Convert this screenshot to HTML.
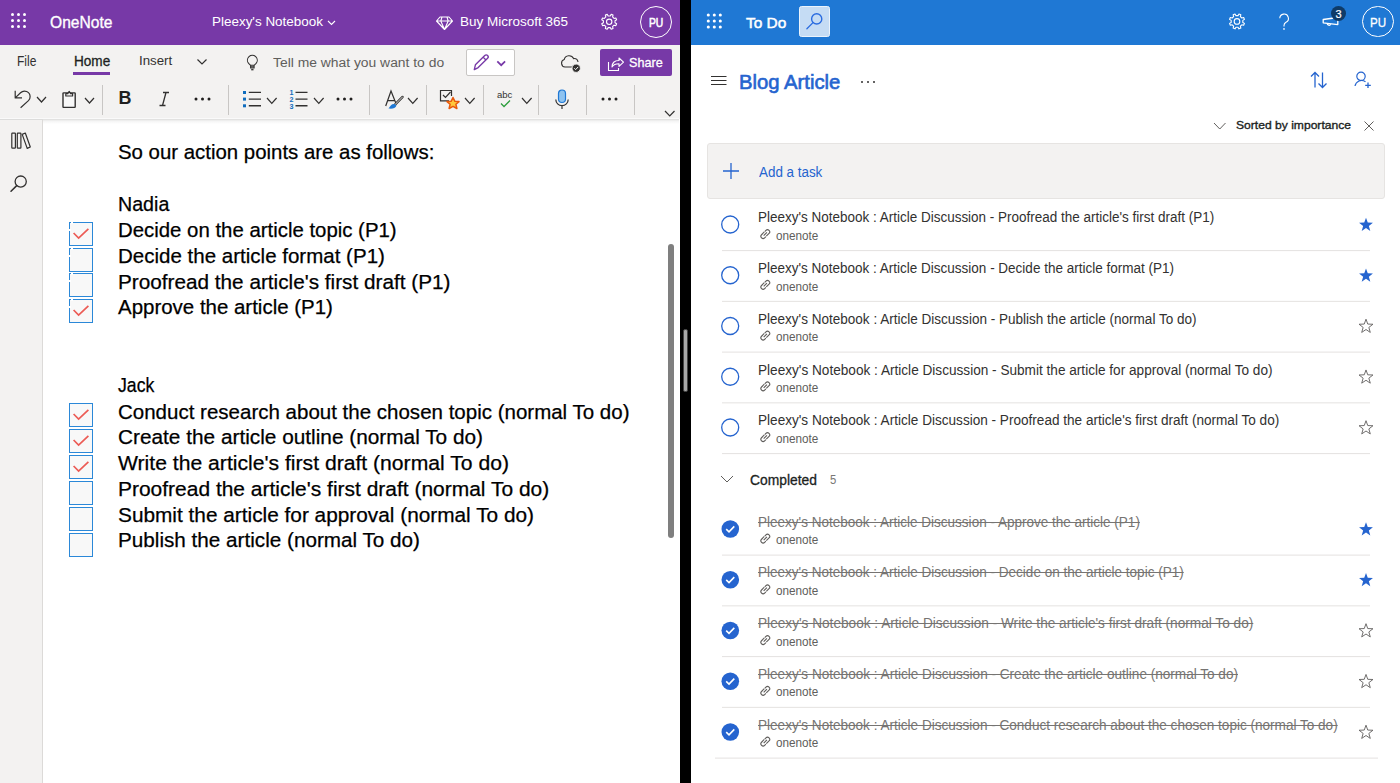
<!DOCTYPE html>
<html><head><meta charset="utf-8"><style>
html,body{margin:0;padding:0;}
body{width:1400px;height:783px;position:relative;overflow:hidden;background:#fff;font-family:"Liberation Sans",sans-serif;}
.a{position:absolute;box-sizing:border-box;}
.t{position:absolute;white-space:nowrap;line-height:1;transform-origin:0 0;font-family:"Liberation Sans",sans-serif;}
svg{position:absolute;overflow:visible;}
</style></head><body>
<div class="a" style="left:0;top:0;width:680px;height:45px;background:#7739a7"></div>
<div class="a" style="left:0;top:45px;width:680px;height:74px;background:#f3f2f1"></div>
<div class="a" style="left:0;top:118px;width:679px;height:1px;background:#fafafa"></div>
<div class="a" style="left:0;top:119px;width:679px;height:5px;background:linear-gradient(#dcdcdb,#f4f4f4 40%,#fff)"></div>
<div class="a" style="left:0;top:120px;width:43px;height:663px;background:#f3f2f1;border-right:1px solid #dcdad8"></div>
<div class="a" style="left:0;top:119px;width:43px;height:1px;background:#dcdcdb"></div>
<svg style="left:0;top:0" width="40" height="40"><circle cx="12.5" cy="14.5" r="1.5" fill="#fff"/><circle cx="12.5" cy="20.5" r="1.5" fill="#fff"/><circle cx="12.5" cy="26.5" r="1.5" fill="#fff"/><circle cx="18.5" cy="14.5" r="1.5" fill="#fff"/><circle cx="18.5" cy="20.5" r="1.5" fill="#fff"/><circle cx="18.5" cy="26.5" r="1.5" fill="#fff"/><circle cx="24.5" cy="14.5" r="1.5" fill="#fff"/><circle cx="24.5" cy="20.5" r="1.5" fill="#fff"/><circle cx="24.5" cy="26.5" r="1.5" fill="#fff"/></svg>
<svg style="left:326px;top:18px" width="12" height="10"><path d="M2 3 L5.5 6.5 L9 3" stroke="#fff" stroke-width="1.1" fill="none"/></svg>
<svg style="left:436px;top:16px" width="18" height="15"><path d="M4 1 H13 L16.5 5 L8.5 13.5 L0.5 5 Z M0.5 5 H16.5 M6 1 L4.8 5 L8.5 13.5 L12.2 5 L11 1" stroke="#fff" stroke-width="1.1" fill="none" stroke-linejoin="round"/></svg>
<svg style="left:0;top:0" width="700" height="45"><path d="M615.01 22.81 L616.64 23.80 L615.87 25.64 L614.03 25.19 L612.59 26.63 L613.04 28.47 L611.20 29.24 L610.21 27.61 L608.19 27.61 L607.20 29.24 L605.36 28.47 L605.81 26.63 L604.37 25.19 L602.53 25.64 L601.76 23.80 L603.39 22.81 L603.39 20.79 L601.76 19.80 L602.53 17.96 L604.37 18.41 L605.81 16.97 L605.36 15.13 L607.20 14.36 L608.19 15.99 L610.21 15.99 L611.20 14.36 L613.04 15.13 L612.59 16.97 L614.03 18.41 L615.87 17.96 L616.64 19.80 L615.01 20.79 Z" stroke="#fff" stroke-width="1.1" fill="none" stroke-linejoin="round"/><circle cx="609.2" cy="21.8" r="2.7" stroke="#fff" stroke-width="1.1" fill="none"/></svg>
<div class="a" style="left:640px;top:5.5px;width:32px;height:32px;border:1.2px solid #fff;border-radius:50%"></div>
<div class="a" style="left:73px;top:72px;width:37px;height:3px;background:#7739a7"></div>
<svg style="left:195px;top:56px" width="14" height="12"><path d="M2.5 3.5 L7 8 L11.5 3.5" stroke="#323130" stroke-width="1.2" fill="none"/></svg>
<svg style="left:244px;top:53px" width="18" height="20"><path d="M6.6 12.3 L4.6 10.4 A4.9 4.9 0 1 1 12.1 10.4 L10.1 12.3 Z M6.6 12.3 V15 H10.1 V12.3 M6.6 13.7 H10.1" stroke="#323130" stroke-width="1.1" fill="none" stroke-linejoin="round"/><path d="M7.2 16.7 H9.5" stroke="#323130" stroke-width="1.3"/></svg>
<div class="a" style="left:466px;top:49px;width:49px;height:27px;background:#fff;border:1px solid #c8c6c4;border-radius:2px"></div>
<svg style="left:470px;top:52px" width="40" height="22"><path d="M4.3 17.6 L5.4 12.8 L14.8 3.4 A1.75 1.75 0 0 1 17.6 6.2 L8.2 15.6 Z M13.1 5.1 L15.9 7.9" stroke="#7739a7" stroke-width="1.35" fill="none" stroke-linejoin="round"/><path d="M27.3 9.3 L31.2 13.2 L35.1 9.3" stroke="#7739a7" stroke-width="1.7" fill="none"/></svg>
<svg style="left:559px;top:54px" width="24" height="20"><path d="M14 13 H6 A3.8 3.8 0 0 1 5.2 5.6 A5 5 0 0 1 14.6 4.6 A4 4 0 0 1 19 8" stroke="#323130" stroke-width="1.1" fill="none"/><circle cx="17.2" cy="14.2" r="4.2" fill="#323130" stroke="#f3f2f1" stroke-width="1"/><path d="M15.3 14.3 L16.7 15.6 L19.2 12.9" stroke="#fff" stroke-width="1" fill="none"/></svg>
<div class="a" style="left:600px;top:49px;width:72px;height:27px;background:#7739a7;border-radius:2px"></div>
<svg style="left:606px;top:54px" width="20" height="18"><path d="M2.5 8 V16.5 H12.5 V14 M6 13 C6 8.5 9 6.5 13 6.5 V4 L17.5 8.2 L13 12.4 V9.8 C10 9.8 7.5 10.5 6 13 Z" stroke="#fff" stroke-width="1.1" fill="none" stroke-linejoin="round"/></svg>
<div class="a" style="left:101.5px;top:84.5px;width:1px;height:30px;background:#c8c6c4"></div>
<div class="a" style="left:227.5px;top:84.5px;width:1px;height:30px;background:#c8c6c4"></div>
<div class="a" style="left:369.0px;top:84.5px;width:1px;height:30px;background:#c8c6c4"></div>
<div class="a" style="left:426.0px;top:84.5px;width:1px;height:30px;background:#c8c6c4"></div>
<div class="a" style="left:482.5px;top:84.5px;width:1px;height:30px;background:#c8c6c4"></div>
<div class="a" style="left:538.0px;top:84.5px;width:1px;height:30px;background:#c8c6c4"></div>
<div class="a" style="left:586.0px;top:84.5px;width:1px;height:30px;background:#c8c6c4"></div>
<div class="a" style="left:633.8px;top:84.5px;width:1px;height:30px;background:#c8c6c4"></div>
<svg style="left:12px;top:88px" width="24" height="24"><path d="M3.2 2.8 V9.9 H10 M3.2 9.9 L8.54 4.74 A5.6 5.6 0 0 1 18.1 8.7 A5.6 5.6 0 0 1 16.46 12.66 L8.6 19.8" stroke="#323130" stroke-width="1.2" fill="none" stroke-linejoin="round"/></svg>
<svg style="left:35.9px;top:96.3px" width="11" height="7"><path d="M1 1 L5.5 6 L10 1" stroke="#323130" stroke-width="1.2" fill="none"/></svg>
<svg style="left:60px;top:90px" width="18" height="20"><rect x="3" y="2.9" width="12.2" height="14.5" rx="0.6" stroke="#323130" stroke-width="1.4" fill="#f8f8f8"/><path d="M5.8 6 H12.6 V3.6 H10.6 L9.2 1.4 L7.8 3.6 H5.8 Z" stroke="#323130" stroke-width="1.2" fill="#f3f2f1" stroke-linejoin="round"/></svg>
<svg style="left:83.7px;top:97.3px" width="11" height="7"><path d="M1 1 L5.5 6 L10 1" stroke="#323130" stroke-width="1.2" fill="none"/></svg>
<div class="t" style="left:118.5px;top:89px;font-size:18px;font-weight:700;color:#201f1e">B</div>
<svg style="left:157px;top:90px" width="16" height="18"><path d="M9 2.5 L5.5 15.5 M6 2.5 H12 M2.5 15.5 H8.5" stroke="#323130" stroke-width="1.3" fill="none"/></svg>
<svg style="left:194px;top:96px" width="24" height="6"><circle cx="2.0" cy="3" r="1.5" fill="#201f1e"/><circle cx="8.5" cy="3" r="1.5" fill="#201f1e"/><circle cx="15.0" cy="3" r="1.5" fill="#201f1e"/></svg>
<svg style="left:242px;top:89px" width="22" height="20"><rect x="1" y="2" width="3" height="3" fill="#0f6cbd"/><rect x="1" y="8.6" width="3" height="3" fill="#0f6cbd"/><rect x="1" y="15.3" width="3" height="3" fill="#0f6cbd"/><path d="M6.8 3.4 H19 M6.8 10.1 H19 M6.8 16.8 H19" stroke="#323130" stroke-width="1.4"/></svg>
<svg style="left:265.9px;top:96.8px" width="11.6" height="7.3"><path d="M1 1 L5.8 6.3 L10.6 1" stroke="#323130" stroke-width="1.2" fill="none"/></svg>
<svg style="left:288px;top:89px" width="22" height="20"><text x="1.6" y="6.2" font-size="7.2" font-weight="700" font-family="Liberation Sans" fill="#0f6cbd">1</text><text x="1.6" y="12.9" font-size="7.2" font-weight="700" font-family="Liberation Sans" fill="#0f6cbd">2</text><text x="1.6" y="19.6" font-size="7.2" font-weight="700" font-family="Liberation Sans" fill="#0f6cbd">3</text><path d="M7.5 3.4 H19.5 M7.5 10.1 H19.5 M7.5 16.8 H19.5" stroke="#323130" stroke-width="1.4"/></svg>
<svg style="left:312.8px;top:96.8px" width="11.6" height="7.3"><path d="M1 1 L5.8 6.3 L10.6 1" stroke="#323130" stroke-width="1.2" fill="none"/></svg>
<svg style="left:336px;top:96px" width="24" height="6"><circle cx="2.0" cy="3" r="1.5" fill="#201f1e"/><circle cx="8.5" cy="3" r="1.5" fill="#201f1e"/><circle cx="15.0" cy="3" r="1.5" fill="#201f1e"/></svg>
<svg style="left:384px;top:89px" width="22" height="22"><path d="M1.7 17 L7 2 L12 14.5 M3.6 11.6 H10.6" stroke="#323130" stroke-width="1.2" fill="none"/><path d="M18.6 7.9 L11 15.6" stroke="#323130" stroke-width="2.4" stroke-linecap="round"/><path d="M18.6 7.9 L11 15.6" stroke="#f3f2f1" stroke-width="0.9" stroke-linecap="round"/><path d="M10.5 15 C8 14.5 6.5 16.5 4.5 19.5 C8 20 11.5 19.5 12.5 16.5 Z" fill="#1f78d4"/></svg>
<svg style="left:407.1px;top:96.8px" width="11.6" height="7.3"><path d="M1 1 L5.8 6.3 L10.6 1" stroke="#323130" stroke-width="1.2" fill="none"/></svg>
<svg style="left:438px;top:88px" width="24" height="24"><path d="M11 12.8 H2.5 V2.5 H13.5 V8" stroke="#323130" stroke-width="1.2" fill="none"/><path d="M5 7 L7.5 9.5 L12.5 4" stroke="#323130" stroke-width="1.2" fill="none"/><path d="M15 9.5 L16.9 13.3 L21 13.6 L17.9 16.3 L18.9 20.5 L15 18.3 L11.1 20.5 L12.1 16.3 L9 13.6 L13.1 13.3 Z" fill="#ffc83d" stroke="#e8590c" stroke-width="1.5" stroke-linejoin="round"/></svg>
<svg style="left:464.4px;top:96.8px" width="11.6" height="7.3"><path d="M1 1 L5.8 6.3 L10.6 1" stroke="#323130" stroke-width="1.2" fill="none"/></svg>
<svg style="left:496px;top:89px" width="20" height="20"><text x="1" y="9" font-size="9.5" font-family="Liberation Sans" fill="#323130">abc</text><path d="M5 14.5 L8 17.5 L14 11.5" stroke="#2e9e3e" stroke-width="1.3" fill="none"/></svg>
<svg style="left:521px;top:96.8px" width="11.6" height="7.3"><path d="M1 1 L5.8 6.3 L10.6 1" stroke="#323130" stroke-width="1.2" fill="none"/></svg>
<svg style="left:554px;top:89px" width="16" height="22"><rect x="4.5" y="1" width="7" height="12.5" rx="3.5" fill="#8ec3f0" stroke="#1f78d4" stroke-width="1.2"/><path d="M1.8 10.5 A6.2 6.2 0 0 0 14.2 10.5 M8 16.8 V20" stroke="#323130" stroke-width="1.2" fill="none"/></svg>
<svg style="left:600.5px;top:96px" width="24" height="6"><circle cx="2.0" cy="3" r="1.5" fill="#201f1e"/><circle cx="8.5" cy="3" r="1.5" fill="#201f1e"/><circle cx="15.0" cy="3" r="1.5" fill="#201f1e"/></svg>
<svg style="left:664px;top:109.5px" width="11.5" height="7"><path d="M1 1 L5.75 6 L10.5 1" stroke="#323130" stroke-width="1.2" fill="none"/></svg>
<svg style="left:9px;top:130px" width="24" height="22"><rect x="2.8" y="3.2" width="3.6" height="15" rx="0.6" stroke="#323130" stroke-width="1.2" fill="none"/><rect x="8.3" y="3.2" width="3.6" height="15" rx="0.6" stroke="#323130" stroke-width="1.2" fill="none"/><path d="M13.2 4.4 L16.3 3 L21.3 17 L18.2 18.4 Z" stroke="#323130" stroke-width="1.2" fill="none" stroke-linejoin="round"/></svg>
<svg style="left:8px;top:172px" width="24" height="24"><circle cx="12.7" cy="9.6" r="5.6" stroke="#323130" stroke-width="1.3" fill="none"/><path d="M8.7 13.6 L3 19.3" stroke="#323130" stroke-width="1.5" stroke-linecap="round"/></svg>
<div class="a" style="left:69px;top:222.0px;width:24px;height:24px;border:1.8px solid #2b88d8;background:#f8f8f8"></div><svg style="left:69px;top:222.0px" width="24" height="24"><path d="M4.6 11 L9.6 16 L19.4 6.8" stroke="#ec5b55" stroke-width="1.7" fill="none"/></svg>
<div class="a" style="left:71.2px;top:221.5px;width:1.8px;height:2.6px;background:#fff"></div>
<div class="a" style="left:68.5px;top:229.2px;width:2.5px;height:1.8px;background:#fff"></div>
<div class="a" style="left:69px;top:247.6px;width:24px;height:24px;border:1.8px solid #2b88d8;background:#f8f8f8"></div>
<div class="a" style="left:71.2px;top:247.1px;width:1.8px;height:2.6px;background:#fff"></div>
<div class="a" style="left:68.5px;top:254.8px;width:2.5px;height:1.8px;background:#fff"></div>
<div class="a" style="left:69px;top:273.2px;width:24px;height:24px;border:1.8px solid #2b88d8;background:#f8f8f8"></div>
<div class="a" style="left:71.2px;top:272.7px;width:1.8px;height:2.6px;background:#fff"></div>
<div class="a" style="left:68.5px;top:280.4px;width:2.5px;height:1.8px;background:#fff"></div>
<div class="a" style="left:69px;top:298.8px;width:24px;height:24px;border:1.8px solid #2b88d8;background:#f8f8f8"></div><svg style="left:69px;top:298.8px" width="24" height="24"><path d="M4.6 11 L9.6 16 L19.4 6.8" stroke="#ec5b55" stroke-width="1.7" fill="none"/></svg>
<div class="a" style="left:71.2px;top:298.3px;width:1.8px;height:2.6px;background:#fff"></div>
<div class="a" style="left:68.5px;top:306.0px;width:2.5px;height:1.8px;background:#fff"></div>
<div class="a" style="left:69px;top:403.2px;width:24px;height:24px;border:1.8px solid #2b88d8;background:#f8f8f8"></div><svg style="left:69px;top:403.2px" width="24" height="24"><path d="M4.6 11 L9.6 16 L19.4 6.8" stroke="#ec5b55" stroke-width="1.7" fill="none"/></svg>
<div class="a" style="left:69px;top:429.09999999999997px;width:24px;height:24px;border:1.8px solid #2b88d8;background:#f8f8f8"></div><svg style="left:69px;top:429.09999999999997px" width="24" height="24"><path d="M4.6 11 L9.6 16 L19.4 6.8" stroke="#ec5b55" stroke-width="1.7" fill="none"/></svg>
<div class="a" style="left:69px;top:455.0px;width:24px;height:24px;border:1.8px solid #2b88d8;background:#f8f8f8"></div><svg style="left:69px;top:455.0px" width="24" height="24"><path d="M4.6 11 L9.6 16 L19.4 6.8" stroke="#ec5b55" stroke-width="1.7" fill="none"/></svg>
<div class="a" style="left:69px;top:480.9px;width:24px;height:24px;border:1.8px solid #2b88d8;background:#f8f8f8"></div>
<div class="a" style="left:69px;top:506.79999999999995px;width:24px;height:24px;border:1.8px solid #2b88d8;background:#f8f8f8"></div>
<div class="a" style="left:69px;top:532.7px;width:24px;height:24px;border:1.8px solid #2b88d8;background:#f8f8f8"></div>
<div class="a" style="left:668px;top:244px;width:5.5px;height:294px;background:#7f7f7f;border-radius:3px"></div>
<div class="a" style="left:680px;top:0;width:11px;height:783px;background:#000"></div>
<div class="a" style="left:683px;top:329px;width:4.5px;height:63px;background:#a8a8a8;border:1px solid #444;border-radius:2px"></div>
<div class="a" style="left:691px;top:0;width:709px;height:45px;background:#1f78d4"></div>
<svg style="left:0;top:0" width="740" height="40"><circle cx="708.3" cy="15" r="1.55" fill="#fff"/><circle cx="708.3" cy="21" r="1.55" fill="#fff"/><circle cx="708.3" cy="27" r="1.55" fill="#fff"/><circle cx="714.3" cy="15" r="1.55" fill="#fff"/><circle cx="714.3" cy="21" r="1.55" fill="#fff"/><circle cx="714.3" cy="27" r="1.55" fill="#fff"/><circle cx="720.3" cy="15" r="1.55" fill="#fff"/><circle cx="720.3" cy="21" r="1.55" fill="#fff"/><circle cx="720.3" cy="27" r="1.55" fill="#fff"/></svg>
<div class="a" style="left:799px;top:6px;width:31px;height:31px;background:#c5dcf4;border:1px solid #eaf3fc;border-radius:2.5px"></div>
<svg style="left:799px;top:6px" width="31" height="31"><circle cx="17.7" cy="12.9" r="5.1" stroke="#2a6ce0" stroke-width="1.4" fill="none"/><path d="M14 16.6 L7.9 22.7" stroke="#2a6ce0" stroke-width="1.3" stroke-linecap="round"/></svg>
<svg style="left:0;top:0" width="1400" height="45"><path d="M1242.81 22.41 L1244.44 23.40 L1243.67 25.24 L1241.83 24.79 L1240.39 26.23 L1240.84 28.07 L1239.00 28.84 L1238.01 27.21 L1235.99 27.21 L1235.00 28.84 L1233.16 28.07 L1233.61 26.23 L1232.17 24.79 L1230.33 25.24 L1229.56 23.40 L1231.19 22.41 L1231.19 20.39 L1229.56 19.40 L1230.33 17.56 L1232.17 18.01 L1233.61 16.57 L1233.16 14.73 L1235.00 13.96 L1235.99 15.59 L1238.01 15.59 L1239.00 13.96 L1240.84 14.73 L1240.39 16.57 L1241.83 18.01 L1243.67 17.56 L1244.44 19.40 L1242.81 20.39 Z" stroke="#fff" stroke-width="1.1" fill="none" stroke-linejoin="round"/><circle cx="1237" cy="21.4" r="2.8" stroke="#fff" stroke-width="1.1" fill="none"/></svg>
<svg style="left:1276px;top:12px" width="16" height="20"><path d="M3.8 6.3 A4.3 4.3 0 1 1 10 10.2 C8.6 11 8 11.8 8 13.5 V14.5" stroke="#fff" stroke-width="1.1" fill="none"/><circle cx="8" cy="16.9" r="0.85" fill="#fff"/></svg>
<svg style="left:1320px;top:14px" width="24" height="16"><path d="M3.2 5.5 L17.8 3.5 V10.6 L3.2 8.8 Z" stroke="#fff" stroke-width="1.3" fill="none" stroke-linejoin="round"/><path d="M7.2 9.3 A1.9 1.9 0 0 0 10.8 10.2" stroke="#fff" stroke-width="1.2" fill="none"/></svg>
<div class="a" style="left:1331px;top:6px;width:15px;height:15px;background:#0e3b68;border-radius:50%"></div>
<div class="t" style="left:1335.4px;top:8.6px;font-size:11px;color:#fff;-webkit-text-stroke:0.2px #fff">3</div>
<div class="a" style="left:1362px;top:5.5px;width:31.5px;height:31.5px;border:1.2px solid #fff;border-radius:50%"></div>
<div class="t" style="left:1369.5px;top:15.7px;font-size:13.5px;color:#fff;transform:scaleX(0.86);-webkit-text-stroke:0.3px #fff">PU</div>
<svg style="left:709px;top:74px" width="20" height="14"><path d="M2 2.5 H17.5 M2 6.5 H17.5 M2 10.5 H17.5" stroke="#323130" stroke-width="1.1"/></svg>
<svg style="left:859.5px;top:79px" width="24" height="6"><circle cx="2" cy="3" r="1.0" fill="#323130"/><circle cx="8" cy="3" r="1.0" fill="#323130"/><circle cx="14" cy="3" r="1.0" fill="#323130"/></svg>
<svg style="left:1309px;top:70px" width="20" height="20"><path d="M6 2.5 V17.5 M2 6.5 L6 2.5 L10 6.5 M13.5 2.5 V17.5 M9.5 13.5 L13.5 17.5 L17.5 13.5" stroke="#2564cf" stroke-width="1.3" fill="none"/></svg>
<svg style="left:1353px;top:70px" width="20" height="20"><circle cx="8" cy="6.3" r="4.2" stroke="#2564cf" stroke-width="1.2" fill="none"/><path d="M2 16 A6.6 6.6 0 0 1 12.5 11.8" stroke="#2564cf" stroke-width="1.2" fill="none"/><path d="M15 12.5 V18 M12.2 15.3 H17.8" stroke="#2564cf" stroke-width="1.3"/></svg>
<svg style="left:1213px;top:121.5px" width="13.5" height="8"><path d="M1 1 L6.75 7 L12.5 1" stroke="#605e5c" stroke-width="1.0" fill="none"/></svg>
<svg style="left:1362px;top:119px" width="14" height="14"><path d="M2.5 2.5 L11.5 11.5 M11.5 2.5 L2.5 11.5" stroke="#605e5c" stroke-width="1.0"/></svg>
<div class="a" style="left:707px;top:143px;width:678px;height:56px;background:#f3f2f1;border:1px solid #e6e4e2;border-radius:3px"></div>
<svg style="left:721px;top:161px" width="20" height="20"><path d="M10 2 V18 M2 10 H18" stroke="#2564cf" stroke-width="1.3"/></svg>
<svg style="left:0;top:0" width="1400" height="783"><circle cx="730.2" cy="224.5" r="8.5" fill="none" stroke="#2564cf" stroke-width="1.3"/><path d="M1366.00 217.70 L1367.76 222.57 L1372.94 222.74 L1368.85 225.93 L1370.29 230.91 L1366.00 228.00 L1361.71 230.91 L1363.15 225.93 L1359.06 222.74 L1364.24 222.57 Z" fill="#2564cf"/><rect x="722" y="250.1" width="648" height="1" fill="#e4e2e0"/><circle cx="730.2" cy="275.25" r="8.5" fill="none" stroke="#2564cf" stroke-width="1.3"/><path d="M1366.00 268.45 L1367.76 273.32 L1372.94 273.49 L1368.85 276.68 L1370.29 281.66 L1366.00 278.75 L1361.71 281.66 L1363.15 276.68 L1359.06 273.49 L1364.24 273.32 Z" fill="#2564cf"/><rect x="722" y="300.85" width="648" height="1" fill="#e4e2e0"/><circle cx="730.2" cy="326.0" r="8.5" fill="none" stroke="#2564cf" stroke-width="1.3"/><path d="M1366.00 319.20 L1367.76 324.07 L1372.94 324.24 L1368.85 327.43 L1370.29 332.41 L1366.00 329.50 L1361.71 332.41 L1363.15 327.43 L1359.06 324.24 L1364.24 324.07 Z" fill="none" stroke="#605e5c" stroke-width="0.9" stroke-linejoin="round"/><rect x="722" y="351.6" width="648" height="1" fill="#e4e2e0"/><circle cx="730.2" cy="376.75" r="8.5" fill="none" stroke="#2564cf" stroke-width="1.3"/><path d="M1366.00 369.95 L1367.76 374.82 L1372.94 374.99 L1368.85 378.18 L1370.29 383.16 L1366.00 380.25 L1361.71 383.16 L1363.15 378.18 L1359.06 374.99 L1364.24 374.82 Z" fill="none" stroke="#605e5c" stroke-width="0.9" stroke-linejoin="round"/><rect x="722" y="402.35" width="648" height="1" fill="#e4e2e0"/><circle cx="730.2" cy="427.5" r="8.5" fill="none" stroke="#2564cf" stroke-width="1.3"/><path d="M1366.00 420.70 L1367.76 425.57 L1372.94 425.74 L1368.85 428.93 L1370.29 433.91 L1366.00 431.00 L1361.71 433.91 L1363.15 428.93 L1359.06 425.74 L1364.24 425.57 Z" fill="none" stroke="#605e5c" stroke-width="0.9" stroke-linejoin="round"/><rect x="722" y="453.1" width="648" height="1" fill="#e4e2e0"/><circle cx="730.3" cy="529.0" r="8.8" fill="#2564cf"/><path d="M726.2 529.2 L729 531.8 L734.3 526.4" stroke="#fff" stroke-width="1.6" fill="none"/><path d="M1366.00 522.20 L1367.76 527.07 L1372.94 527.24 L1368.85 530.43 L1370.29 535.41 L1366.00 532.50 L1361.71 535.41 L1363.15 530.43 L1359.06 527.24 L1364.24 527.07 Z" fill="#2564cf"/><rect x="722" y="554.6" width="648" height="1" fill="#e4e2e0"/><circle cx="730.3" cy="579.75" r="8.8" fill="#2564cf"/><path d="M726.2 579.95 L729 582.55 L734.3 577.15" stroke="#fff" stroke-width="1.6" fill="none"/><path d="M1366.00 572.95 L1367.76 577.82 L1372.94 577.99 L1368.85 581.18 L1370.29 586.16 L1366.00 583.25 L1361.71 586.16 L1363.15 581.18 L1359.06 577.99 L1364.24 577.82 Z" fill="#2564cf"/><rect x="722" y="605.35" width="648" height="1" fill="#e4e2e0"/><circle cx="730.3" cy="630.5" r="8.8" fill="#2564cf"/><path d="M726.2 630.7 L729 633.3 L734.3 627.9" stroke="#fff" stroke-width="1.6" fill="none"/><path d="M1366.00 623.70 L1367.76 628.57 L1372.94 628.74 L1368.85 631.93 L1370.29 636.91 L1366.00 634.00 L1361.71 636.91 L1363.15 631.93 L1359.06 628.74 L1364.24 628.57 Z" fill="none" stroke="#605e5c" stroke-width="0.9" stroke-linejoin="round"/><rect x="722" y="656.1" width="648" height="1" fill="#e4e2e0"/><circle cx="730.3" cy="681.25" r="8.8" fill="#2564cf"/><path d="M726.2 681.45 L729 684.05 L734.3 678.65" stroke="#fff" stroke-width="1.6" fill="none"/><path d="M1366.00 674.45 L1367.76 679.32 L1372.94 679.49 L1368.85 682.68 L1370.29 687.66 L1366.00 684.75 L1361.71 687.66 L1363.15 682.68 L1359.06 679.49 L1364.24 679.32 Z" fill="none" stroke="#605e5c" stroke-width="0.9" stroke-linejoin="round"/><rect x="722" y="706.85" width="648" height="1" fill="#e4e2e0"/><circle cx="730.3" cy="732.0" r="8.8" fill="#2564cf"/><path d="M726.2 732.2 L729 734.8 L734.3 729.4" stroke="#fff" stroke-width="1.6" fill="none"/><path d="M1366.00 725.20 L1367.76 730.07 L1372.94 730.24 L1368.85 733.43 L1370.29 738.41 L1366.00 735.50 L1361.71 738.41 L1363.15 733.43 L1359.06 730.24 L1364.24 730.07 Z" fill="none" stroke="#605e5c" stroke-width="0.9" stroke-linejoin="round"/><rect x="715" y="757.6" width="663" height="1" fill="#e4e2e0"/><g transform="translate(765.3 234.1) rotate(-45)"><path d="M0.8 -2.2 H-3.1 A2.2 2.2 0 0 0 -3.1 2.2 H-1.4 M-0.8 2.2 H3.1 A2.2 2.2 0 0 0 3.1 -2.2 H1.4 M-2.3 0 H2.3" stroke="#605e5c" stroke-width="1.1" fill="none"/></g><g transform="translate(765.3 284.85) rotate(-45)"><path d="M0.8 -2.2 H-3.1 A2.2 2.2 0 0 0 -3.1 2.2 H-1.4 M-0.8 2.2 H3.1 A2.2 2.2 0 0 0 3.1 -2.2 H1.4 M-2.3 0 H2.3" stroke="#605e5c" stroke-width="1.1" fill="none"/></g><g transform="translate(765.3 335.6) rotate(-45)"><path d="M0.8 -2.2 H-3.1 A2.2 2.2 0 0 0 -3.1 2.2 H-1.4 M-0.8 2.2 H3.1 A2.2 2.2 0 0 0 3.1 -2.2 H1.4 M-2.3 0 H2.3" stroke="#605e5c" stroke-width="1.1" fill="none"/></g><g transform="translate(765.3 386.35) rotate(-45)"><path d="M0.8 -2.2 H-3.1 A2.2 2.2 0 0 0 -3.1 2.2 H-1.4 M-0.8 2.2 H3.1 A2.2 2.2 0 0 0 3.1 -2.2 H1.4 M-2.3 0 H2.3" stroke="#605e5c" stroke-width="1.1" fill="none"/></g><g transform="translate(765.3 437.1) rotate(-45)"><path d="M0.8 -2.2 H-3.1 A2.2 2.2 0 0 0 -3.1 2.2 H-1.4 M-0.8 2.2 H3.1 A2.2 2.2 0 0 0 3.1 -2.2 H1.4 M-2.3 0 H2.3" stroke="#605e5c" stroke-width="1.1" fill="none"/></g><g transform="translate(765.3 538.6) rotate(-45)"><path d="M0.8 -2.2 H-3.1 A2.2 2.2 0 0 0 -3.1 2.2 H-1.4 M-0.8 2.2 H3.1 A2.2 2.2 0 0 0 3.1 -2.2 H1.4 M-2.3 0 H2.3" stroke="#605e5c" stroke-width="1.1" fill="none"/></g><g transform="translate(765.3 589.35) rotate(-45)"><path d="M0.8 -2.2 H-3.1 A2.2 2.2 0 0 0 -3.1 2.2 H-1.4 M-0.8 2.2 H3.1 A2.2 2.2 0 0 0 3.1 -2.2 H1.4 M-2.3 0 H2.3" stroke="#605e5c" stroke-width="1.1" fill="none"/></g><g transform="translate(765.3 640.1) rotate(-45)"><path d="M0.8 -2.2 H-3.1 A2.2 2.2 0 0 0 -3.1 2.2 H-1.4 M-0.8 2.2 H3.1 A2.2 2.2 0 0 0 3.1 -2.2 H1.4 M-2.3 0 H2.3" stroke="#605e5c" stroke-width="1.1" fill="none"/></g><g transform="translate(765.3 690.85) rotate(-45)"><path d="M0.8 -2.2 H-3.1 A2.2 2.2 0 0 0 -3.1 2.2 H-1.4 M-0.8 2.2 H3.1 A2.2 2.2 0 0 0 3.1 -2.2 H1.4 M-2.3 0 H2.3" stroke="#605e5c" stroke-width="1.1" fill="none"/></g><g transform="translate(765.3 741.6) rotate(-45)"><path d="M0.8 -2.2 H-3.1 A2.2 2.2 0 0 0 -3.1 2.2 H-1.4 M-0.8 2.2 H3.1 A2.2 2.2 0 0 0 3.1 -2.2 H1.4 M-2.3 0 H2.3" stroke="#605e5c" stroke-width="1.1" fill="none"/></g></svg>
<svg style="left:720px;top:475px" width="14" height="8"><path d="M1 1 L7.0 7 L13 1" stroke="#605e5c" stroke-width="1.0" fill="none"/></svg>
<div id="t0" class="t tx" style="left:50.00px;top:15.09px;font-size:16.72px;color:#fff;font-weight:400;transform:scaleX(0.9333);-webkit-text-stroke:0.35px #fff;">OneNote</div>
<div id="t1" class="t tx" style="left:212.00px;top:15.11px;font-size:13.52px;color:#fff;font-weight:400;transform:scaleX(0.9952);">Pleexy's Notebook</div>
<div id="t2" class="t tx" style="left:460.30px;top:14.78px;font-size:13.08px;color:#fff;font-weight:400;transform:scaleX(1.0318);">Buy Microsoft 365</div>
<div id="t3" class="t tx" style="left:648.90px;top:16.33px;font-size:13.37px;color:#fff;font-weight:400;transform:scaleX(0.7704);-webkit-text-stroke:0.6px #fff;">PU</div>
<div id="t4" class="t tx" style="left:16.90px;top:53.99px;font-size:14.24px;color:#323130;font-weight:400;transform:scaleX(0.8458);">File</div>
<div id="t5" class="t tx" style="left:73.60px;top:54.19px;font-size:14.24px;color:#201f1e;font-weight:400;transform:scaleX(0.9530);-webkit-text-stroke:0.3px #201f1e;">Home</div>
<div id="t6" class="t tx" style="left:139.30px;top:54.33px;font-size:13.37px;color:#323130;font-weight:400;transform:scaleX(0.9934);">Insert</div>
<div id="t7" class="t tx" style="left:272.70px;top:55.79px;font-size:13.66px;color:#605e5c;font-weight:400;transform:scaleX(1.0153);">Tell me what you want to do</div>
<div id="t8" class="t tx" style="left:629.30px;top:56.90px;font-size:12.94px;color:#fff;font-weight:400;transform:scaleX(0.9759);-webkit-text-stroke:0.3px #fff;">Share</div>
<div id="t9" class="t tx" style="left:118.00px;top:141.29px;font-size:21.08px;color:#000;font-weight:400;transform:scaleX(0.9676);-webkit-text-stroke:0.25px #000;">So our action points are as follows:</div>
<div id="t10" class="t tx" style="left:118.00px;top:193.09px;font-size:21.08px;color:#000;font-weight:400;transform:scaleX(0.9314);-webkit-text-stroke:0.25px #000;">Nadia</div>
<div id="t11" class="t tx" style="left:118.00px;top:219.29px;font-size:21.08px;color:#000;font-weight:400;transform:scaleX(0.9666);-webkit-text-stroke:0.25px #000;">Decide on the article topic (P1)</div>
<div id="t12" class="t tx" style="left:118.00px;top:245.09px;font-size:21.08px;color:#000;font-weight:400;transform:scaleX(0.9736);-webkit-text-stroke:0.25px #000;">Decide the article format (P1)</div>
<div id="t13" class="t tx" style="left:118.00px;top:270.79px;font-size:21.08px;color:#000;font-weight:400;transform:scaleX(0.9838);-webkit-text-stroke:0.25px #000;">Proofread the article's first draft (P1)</div>
<div id="t14" class="t tx" style="left:118.00px;top:295.89px;font-size:21.08px;color:#000;font-weight:400;transform:scaleX(0.9705);-webkit-text-stroke:0.25px #000;">Approve the article (P1)</div>
<div id="t15" class="t tx" style="left:118.00px;top:374.49px;font-size:21.08px;color:#000;font-weight:400;transform:scaleX(0.8375);-webkit-text-stroke:0.25px #000;">Jack</div>
<div id="t16" class="t tx" style="left:118.00px;top:400.79px;font-size:21.08px;color:#000;font-weight:400;transform:scaleX(0.9730);-webkit-text-stroke:0.25px #000;">Conduct research about the chosen topic (normal To do)</div>
<div id="t17" class="t tx" style="left:118.00px;top:426.49px;font-size:21.08px;color:#000;font-weight:400;transform:scaleX(0.9869);-webkit-text-stroke:0.25px #000;">Create the article outline (normal To do)</div>
<div id="t18" class="t tx" style="left:118.00px;top:452.19px;font-size:21.08px;color:#000;font-weight:400;transform:scaleX(1.0030);-webkit-text-stroke:0.25px #000;">Write the article's first draft (normal To do)</div>
<div id="t19" class="t tx" style="left:118.00px;top:477.89px;font-size:21.08px;color:#000;font-weight:400;transform:scaleX(0.9945);-webkit-text-stroke:0.25px #000;">Proofread the article's first draft (normal To do)</div>
<div id="t20" class="t tx" style="left:118.00px;top:503.59px;font-size:21.08px;color:#000;font-weight:400;transform:scaleX(0.9872);-webkit-text-stroke:0.25px #000;">Submit the article for approval (normal To do)</div>
<div id="t21" class="t tx" style="left:118.00px;top:529.29px;font-size:21.08px;color:#000;font-weight:400;transform:scaleX(0.9814);-webkit-text-stroke:0.25px #000;">Publish the article (normal To do)</div>
<div id="t22" class="t tx" style="left:746.40px;top:14.58px;font-size:15.55px;color:#fff;font-weight:400;transform:scaleX(0.9920);-webkit-text-stroke:0.5px #fff;">To Do</div>
<div id="t23" class="t tx" style="left:739.30px;top:72.50px;font-size:19.77px;color:#2564cf;font-weight:400;transform:scaleX(1.0254);-webkit-text-stroke:0.6px #2564cf;">Blog Article</div>
<div id="t24" class="t tx" style="left:1236.40px;top:119.54px;font-size:11.48px;color:#201f1e;font-weight:400;transform:scaleX(1.0549);-webkit-text-stroke:0.35px #201f1e;">Sorted by importance</div>
<div id="t25" class="t tx" style="left:758.60px;top:165.17px;font-size:14.39px;color:#2564cf;font-weight:400;transform:scaleX(0.9317);">Add a task</div>
<div id="t26" class="t tx" style="left:750.30px;top:472.82px;font-size:14.10px;color:#201f1e;font-weight:400;transform:scaleX(0.9813);-webkit-text-stroke:0.3px #201f1e;">Completed</div>
<div id="t27" class="t tx" style="left:830.30px;top:473.19px;font-size:13.66px;color:#797775;font-weight:400;transform:scaleX(0.8279);">5</div>
<div id="t28" class="t tx" style="left:758.10px;top:211.44px;font-size:13.95px;color:#323130;font-weight:400;transform:scaleX(0.9673);">Pleexy's Notebook : Article Discussion - Proofread the article's first draft (P1)</div>
<div id="t29" class="t tx" style="left:775.50px;top:229.92px;font-size:12.21px;color:#605e5c;font-weight:400;transform:scaleX(0.9609);">onenote</div>
<div id="t30" class="t tx" style="left:758.10px;top:262.19px;font-size:13.95px;color:#323130;font-weight:400;transform:scaleX(0.9684);">Pleexy's Notebook : Article Discussion - Decide the article format (P1)</div>
<div id="t31" class="t tx" style="left:775.50px;top:280.67px;font-size:12.21px;color:#605e5c;font-weight:400;transform:scaleX(0.9609);">onenote</div>
<div id="t32" class="t tx" style="left:758.10px;top:312.94px;font-size:13.95px;color:#323130;font-weight:400;transform:scaleX(0.9708);">Pleexy's Notebook : Article Discussion - Publish the article (normal To do)</div>
<div id="t33" class="t tx" style="left:775.50px;top:331.42px;font-size:12.21px;color:#605e5c;font-weight:400;transform:scaleX(0.9609);">onenote</div>
<div id="t34" class="t tx" style="left:758.10px;top:363.69px;font-size:13.95px;color:#323130;font-weight:400;transform:scaleX(0.9766);">Pleexy's Notebook : Article Discussion - Submit the article for approval (normal To do)</div>
<div id="t35" class="t tx" style="left:775.50px;top:382.17px;font-size:12.21px;color:#605e5c;font-weight:400;transform:scaleX(0.9609);">onenote</div>
<div id="t36" class="t tx" style="left:758.10px;top:414.44px;font-size:13.95px;color:#323130;font-weight:400;transform:scaleX(0.9744);">Pleexy's Notebook : Article Discussion - Proofread the article's first draft (normal To do)</div>
<div id="t37" class="t tx" style="left:775.50px;top:432.92px;font-size:12.21px;color:#605e5c;font-weight:400;transform:scaleX(0.9609);">onenote</div>
<div id="t38" class="t tx" style="left:758.10px;top:515.64px;font-size:13.95px;color:#767472;font-weight:400;transform:scaleX(0.9696);text-decoration:line-through;">Pleexy's Notebook : Article Discussion - Approve the article (P1)</div>
<div id="t39" class="t tx" style="left:775.50px;top:534.22px;font-size:12.21px;color:#605e5c;font-weight:400;transform:scaleX(0.9609);">onenote</div>
<div id="t40" class="t tx" style="left:758.10px;top:566.39px;font-size:13.95px;color:#767472;font-weight:400;transform:scaleX(0.9702);text-decoration:line-through;">Pleexy's Notebook : Article Discussion - Decide on the article topic (P1)</div>
<div id="t41" class="t tx" style="left:775.50px;top:584.97px;font-size:12.21px;color:#605e5c;font-weight:400;transform:scaleX(0.9609);">onenote</div>
<div id="t42" class="t tx" style="left:758.10px;top:617.14px;font-size:13.95px;color:#767472;font-weight:400;transform:scaleX(0.9789);text-decoration:line-through;">Pleexy's Notebook : Article Discussion - Write the article's first draft (normal To do)</div>
<div id="t43" class="t tx" style="left:775.50px;top:635.72px;font-size:12.21px;color:#605e5c;font-weight:400;transform:scaleX(0.9609);">onenote</div>
<div id="t44" class="t tx" style="left:758.10px;top:667.89px;font-size:13.95px;color:#767472;font-weight:400;transform:scaleX(0.9741);text-decoration:line-through;">Pleexy's Notebook : Article Discussion - Create the article outline (normal To do)</div>
<div id="t45" class="t tx" style="left:775.50px;top:686.47px;font-size:12.21px;color:#605e5c;font-weight:400;transform:scaleX(0.9609);">onenote</div>
<div id="t46" class="t tx" style="left:758.10px;top:718.64px;font-size:13.95px;color:#767472;font-weight:400;transform:scaleX(0.9729);text-decoration:line-through;">Pleexy's Notebook : Article Discussion - Conduct research about the chosen topic (normal To do)</div>
<div id="t47" class="t tx" style="left:775.50px;top:737.22px;font-size:12.21px;color:#605e5c;font-weight:400;transform:scaleX(0.9609);">onenote</div>
</body></html>
